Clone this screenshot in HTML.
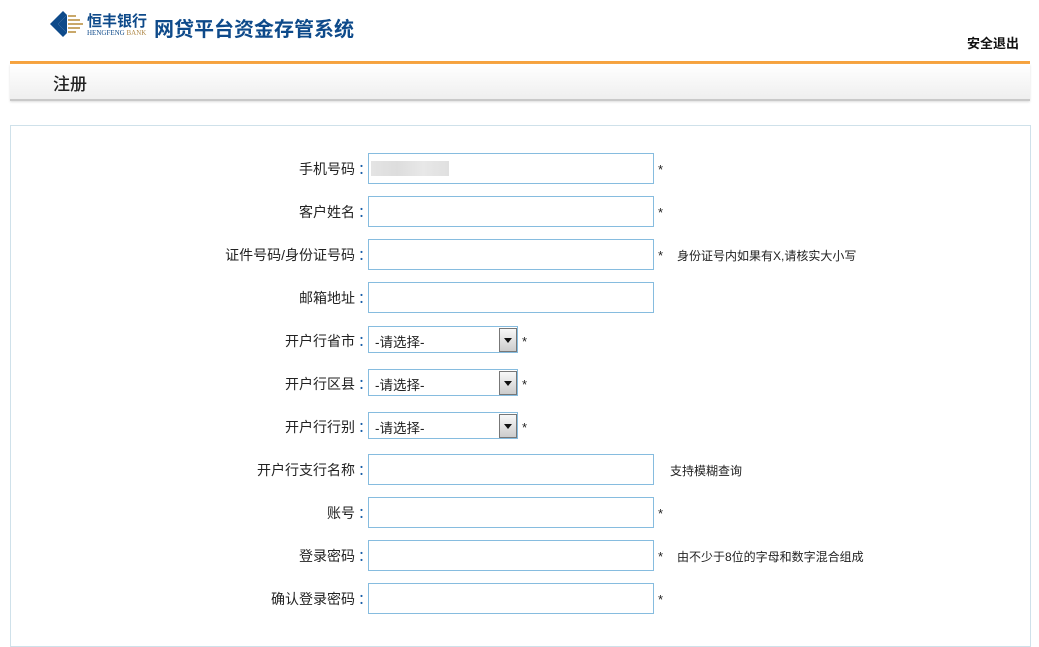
<!DOCTYPE html>
<html><head><meta charset="utf-8"><style>
html,body{margin:0;width:1039px;height:616px;overflow:hidden;background:#fff;font-family:"Liberation Sans","Noto Sans CJK SC",sans-serif;font-size:13px;color:#222}
.logo{position:absolute;left:50px;top:11px}
.title{position:absolute;left:154px;top:13px;font-size:20px;color:#0e4a8a;font-weight:bold}
.exit{position:absolute;right:20px;top:33px;font-size:13px;font-weight:bold;color:#111}
.orange{position:absolute;left:10px;right:9px;top:61px;height:3px;background:#f6a23c}
.bar{position:absolute;left:10px;right:9px;top:64px;height:35px;background:linear-gradient(#fff,#efefef);border-bottom:2px solid #c9c9c9;box-shadow:0 1px 2px #ddd}
.bar span{position:absolute;left:43px;top:6px;font-size:17px;color:#222;font-weight:500}
.box{position:absolute;left:10px;right:8px;top:125px;height:520px;border:1px solid #cfe1ea}
.row{position:absolute;left:0;width:1039px;height:31px}
.lab{position:absolute;right:684px;top:6px;text-align:right;white-space:nowrap;font-size:14px}
.lab b{font-weight:normal;color:#1a5fa8;position:absolute;left:100%;top:0;margin-left:3px}
.inp{position:absolute;left:368px;top:0;width:284px;height:29px;border:1px solid #86bcdf;background:#fff}
.sel{position:absolute;left:368px;top:1px;width:148px;height:25px;border:1px solid #86bcdf;background:#fff}
.sel span{position:absolute;left:6px;top:4px;font-size:13.5px}
.sel i{position:absolute;right:0;top:1px;width:16px;height:22px;border:1px solid #777;background:linear-gradient(#f8f8f8,#ccc)}
.sel i:after{content:"";position:absolute;left:4px;top:9px;border-left:4px solid transparent;border-right:4px solid transparent;border-top:5px solid #111}
.st{position:absolute;top:9px;font-size:13px}
.note{position:absolute;top:8px;font-size:12px}
</style></head><body>
<svg class="logo" width="34" height="26" viewBox="0 0 34 26"><polygon points="0,13 13,0 17,4 8,13 17,22 13,26" fill="#0e4a8a"/><polygon points="8,13 17,4 17,22" fill="#0e4a8a"/><g fill="#c9a86a"><rect x="18" y="4" width="8" height="2"/><rect x="18" y="8" width="12" height="2"/><rect x="18" y="12" width="15" height="2"/><rect x="18" y="16" width="12" height="2"/><rect x="18" y="20" width="8" height="2"/></g></svg>
<div style="position:absolute;left:87px;top:10px;font-size:15px;font-weight:bold;color:#0e4a8a">恒丰银行</div>
<div style="position:absolute;left:87px;top:29px;font-size:7px;font-family:'Liberation Serif',serif;color:#0e4a8a">HENGFENG <span style="color:#b08a4a">BANK</span></div>
<div class="title">网贷平台资金存管系统</div>
<div class="exit">安全退出</div>
<div class="orange"></div>
<div class="bar"><span>注册</span></div>
<div class="box"></div>

<div class="row" style="top:153px"><div class="lab">手机号码<b>：</b></div><div class="inp"><div style="position:absolute;left:2px;top:7px;width:78px;height:15px;background:linear-gradient(90deg,#e4e4e4,#ddd,#e8e8e8,#e0e0e0)"></div></div><span class="st" style="left:658px">*</span></div>
<div class="row" style="top:196px"><div class="lab">客户姓名<b>：</b></div><div class="inp"></div><span class="st" style="left:658px">*</span></div>
<div class="row" style="top:239px"><div class="lab">证件号码/身份证号码<b>：</b></div><div class="inp"></div><span class="st" style="left:658px">*</span><span class="note" style="left:677px">身份证号内如果有X,请核实大小写</span></div>
<div class="row" style="top:282px"><div class="lab">邮箱地址<b>：</b></div><div class="inp"></div></div>
<div class="row" style="top:325px"><div class="lab">开户行省市<b>：</b></div><div class="sel"><span>-请选择-</span><i></i></div><span class="st" style="left:522px">*</span></div>
<div class="row" style="top:368px"><div class="lab">开户行区县<b>：</b></div><div class="sel"><span>-请选择-</span><i></i></div><span class="st" style="left:522px">*</span></div>
<div class="row" style="top:411px"><div class="lab">开户行行别<b>：</b></div><div class="sel"><span>-请选择-</span><i></i></div><span class="st" style="left:522px">*</span></div>
<div class="row" style="top:454px"><div class="lab">开户行支行名称<b>：</b></div><div class="inp"></div><span class="note" style="left:670px">支持模糊查询</span></div>
<div class="row" style="top:497px"><div class="lab">账号<b>：</b></div><div class="inp"></div><span class="st" style="left:658px">*</span></div>
<div class="row" style="top:540px"><div class="lab">登录密码<b>：</b></div><div class="inp"></div><span class="st" style="left:658px">*</span><span class="note" style="left:677px">由不少于8位的字母和数字混合组成</span></div>
<div class="row" style="top:583px"><div class="lab">确认登录密码<b>：</b></div><div class="inp"></div><span class="st" style="left:658px">*</span></div>
</body></html>
